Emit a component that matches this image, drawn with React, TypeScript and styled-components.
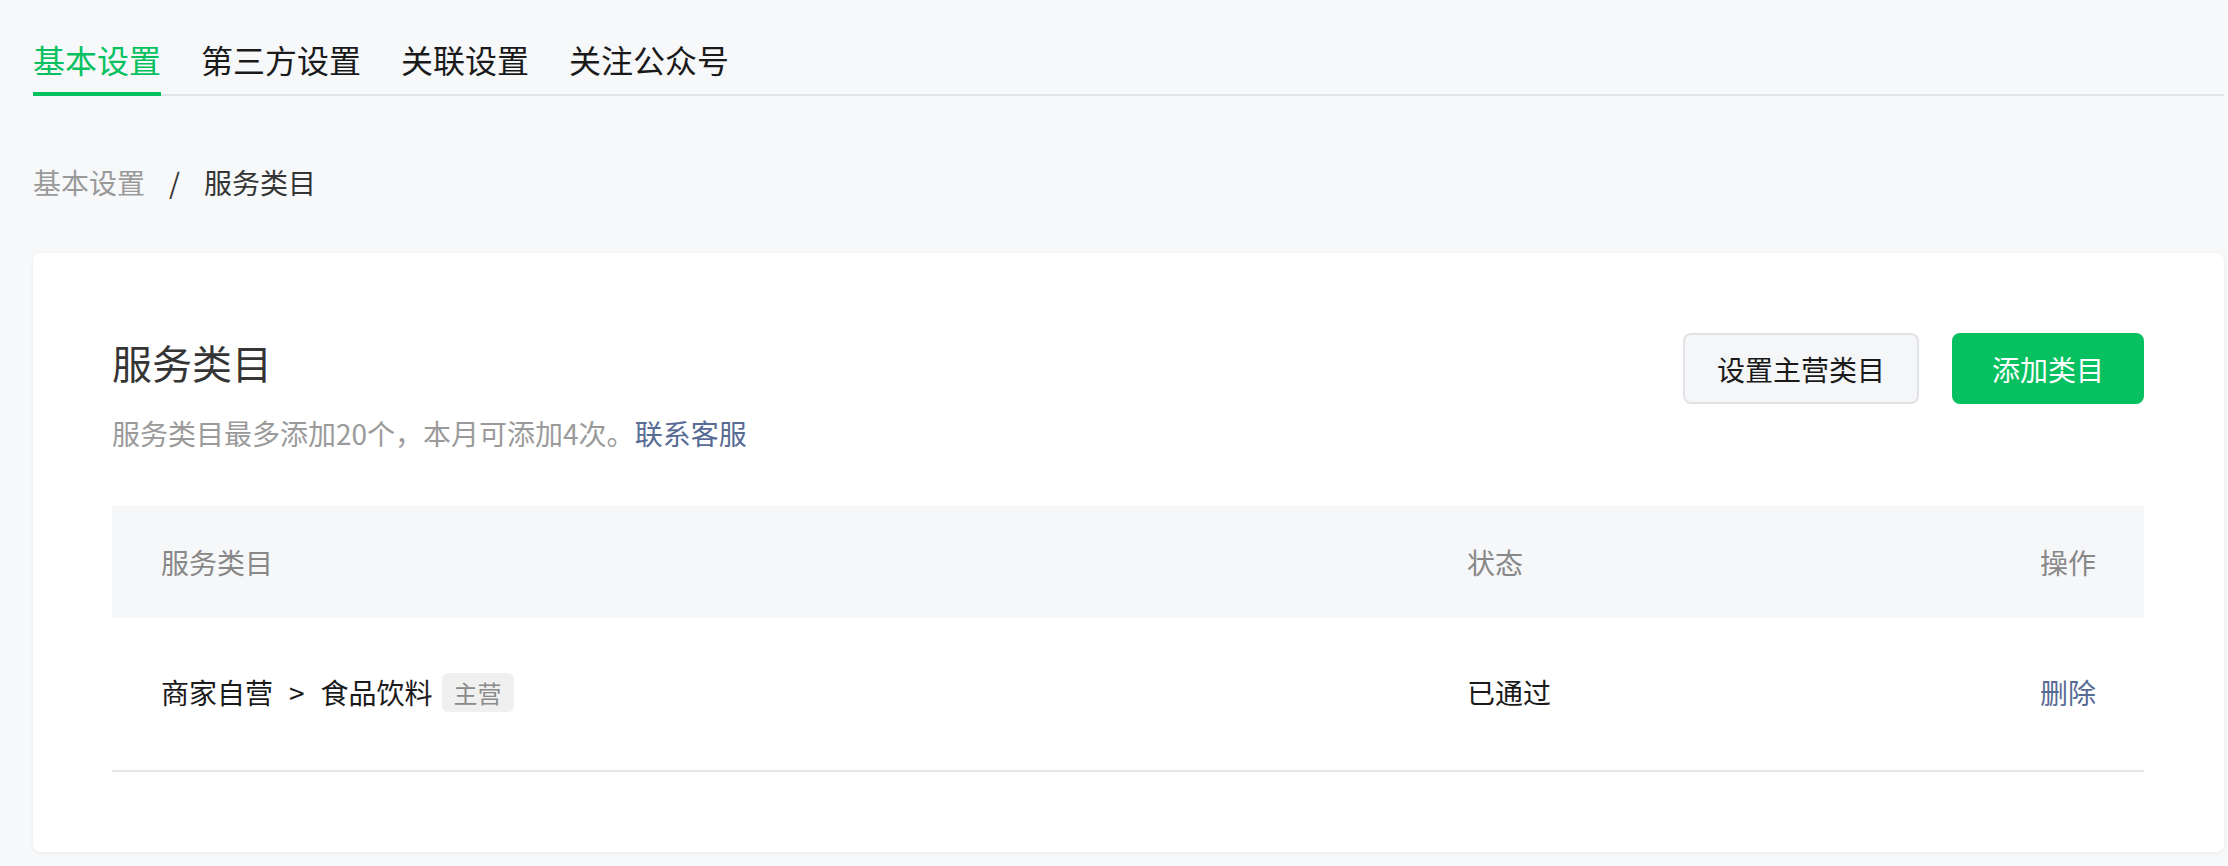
import React from 'react'
import styled, { createGlobalStyle } from 'styled-components'

const GlobalStyle = createGlobalStyle`
  html, body {
    margin: 0;
    padding: 0;
    background: #f7f8fa;
  }
  body {
    font-family: "Noto Sans CJK SC", "Noto Sans", sans-serif;
    color: #1a1a1a;
  }
  * {
    box-sizing: border-box;
  }
`

const tabs = ['基本设置', '第三方设置', '关联设置', '关注公众号']

interface CategoryRow {
  parent: string
  name: string
  primary?: boolean
  status: string
}

const rows: CategoryRow[] = [{ parent: '商家自营', name: '食品饮料', primary: true, status: '已通过' }]

const App: React.FC = () => {
  return (
    <>
      <GlobalStyle />
      <StyledPage>
        <StyledTabBar>
          {tabs.map((t, i) => (
            <StyledTab key={t} active={i === 0}>
              {t}
            </StyledTab>
          ))}
        </StyledTabBar>

        <StyledBreadcrumb>
          <StyledCrumbLink>基本设置</StyledCrumbLink>
          <StyledCrumbSep>/</StyledCrumbSep>
          <StyledCrumbCurrent>服务类目</StyledCrumbCurrent>
        </StyledBreadcrumb>

        <StyledCard>
          <StyledCardHeader>
            <StyledHeaderText>
              <StyledTitle>服务类目</StyledTitle>
              <StyledDesc>
                服务类目最多添加20个，本月可添加4次。<StyledLink>联系客服</StyledLink>
              </StyledDesc>
            </StyledHeaderText>
            <StyledActions>
              <StyledButton>设置主营类目</StyledButton>
              <StyledButton primary>添加类目</StyledButton>
            </StyledActions>
          </StyledCardHeader>

          <StyledTable>
            <StyledHeadRow>
              <span>服务类目</span>
              <span>状态</span>
              <StyledRight>操作</StyledRight>
            </StyledHeadRow>
            {rows.map((r) => (
              <StyledBodyRow key={r.parent + r.name}>
                <StyledCategory>
                  {r.parent}
                  <StyledArrow>&gt;</StyledArrow>
                  {r.name}
                  {r.primary && <StyledTag>主营</StyledTag>}
                </StyledCategory>
                <span>{r.status}</span>
                <StyledRight>
                  <StyledLink>删除</StyledLink>
                </StyledRight>
              </StyledBodyRow>
            ))}
          </StyledTable>
        </StyledCard>
      </StyledPage>
    </>
  )
}

const StyledPage = styled.div`
  padding: 35px 4px 12px 33px;
`

const StyledTabBar = styled.div`
  display: flex;
  gap: 40px;
  box-shadow: inset 0 -2px 0 #e3e4e7;
`

const StyledTab = styled.div<{ active?: boolean }>`
  font-size: 32px;
  line-height: 48px;
  padding-bottom: 9px;
  border-bottom: 4px solid ${(p) => (p.active ? '#07c160' : 'transparent')};
  color: ${(p) => (p.active ? '#07c160' : '#1a1a1a')};
  cursor: pointer;
`

const StyledBreadcrumb = styled.div`
  display: flex;
  align-items: center;
  margin-top: 66px;
  font-size: 28px;
  line-height: 40px;
`

const StyledCrumbLink = styled.span`
  color: #9a9a9a;
`

const StyledCrumbSep = styled.span`
  color: #353535;
  margin: 0 24px;
`

const StyledCrumbCurrent = styled.span`
  color: #353535;
`

const StyledCard = styled.div`
  margin-top: 51px;
  background: #fff;
  border-radius: 8px;
  box-shadow: 0 1px 4px rgba(0, 0, 0, 0.06);
  padding: 80px 80px 80px 79px;
`

const StyledCardHeader = styled.div`
  display: flex;
  justify-content: space-between;
  align-items: flex-start;
`

const StyledHeaderText = styled.div`
  display: flex;
  flex-direction: column;
`

const StyledTitle = styled.div`
  font-size: 40px;
  line-height: 58px;
  color: #353535;
`

const StyledDesc = styled.div`
  margin-top: 22px;
  font-size: 28px;
  line-height: 40px;
  color: #9a9a9a;
`

const StyledLink = styled.a`
  color: #576b95;
  cursor: pointer;
`

const StyledActions = styled.div`
  display: flex;
  gap: 33px;
`

const StyledButton = styled.button<{ primary?: boolean }>`
  height: 71px;
  min-width: 192px;
  padding: 0 32px;
  border-radius: 8px;
  font-family: inherit;
  font-size: 28px;
  border: 2px solid ${(p) => (p.primary ? '#07c160' : '#e1e2e6')};
  background: ${(p) => (p.primary ? '#07c160' : '#f5f6f8')};
  color: ${(p) => (p.primary ? '#fff' : '#1a1a1a')};
  cursor: pointer;
`

const StyledTable = styled.div`
  margin-top: 53px;
`

const StyledRowBase = styled.div`
  display: grid;
  grid-template-columns: 1fr 573px auto;
  align-items: center;
  padding: 0 48px 0 49px;
  font-size: 28px;
  line-height: 40px;
`

const StyledHeadRow = styled(StyledRowBase)`
  height: 112px;
  background: #f6f7f9;
  color: #888;
`

const StyledBodyRow = styled(StyledRowBase)`
  height: 154px;
  padding-bottom: 4px;
  border-bottom: 2px solid #e6e6eb;
  color: #1a1a1a;
`

const StyledRight = styled.span`
  text-align: right;
`

const StyledCategory = styled.span`
  display: flex;
  align-items: center;
`

const StyledArrow = styled.span`
  margin: 0 16px;
`

const StyledTag = styled.span`
  margin-left: 9px;
  padding: 0 12px;
  height: 39px;
  line-height: 39px;
  font-size: 24px;
  border-radius: 6px;
  background: #f0f0f0;
  color: #8a8a8a;
`

export default App
